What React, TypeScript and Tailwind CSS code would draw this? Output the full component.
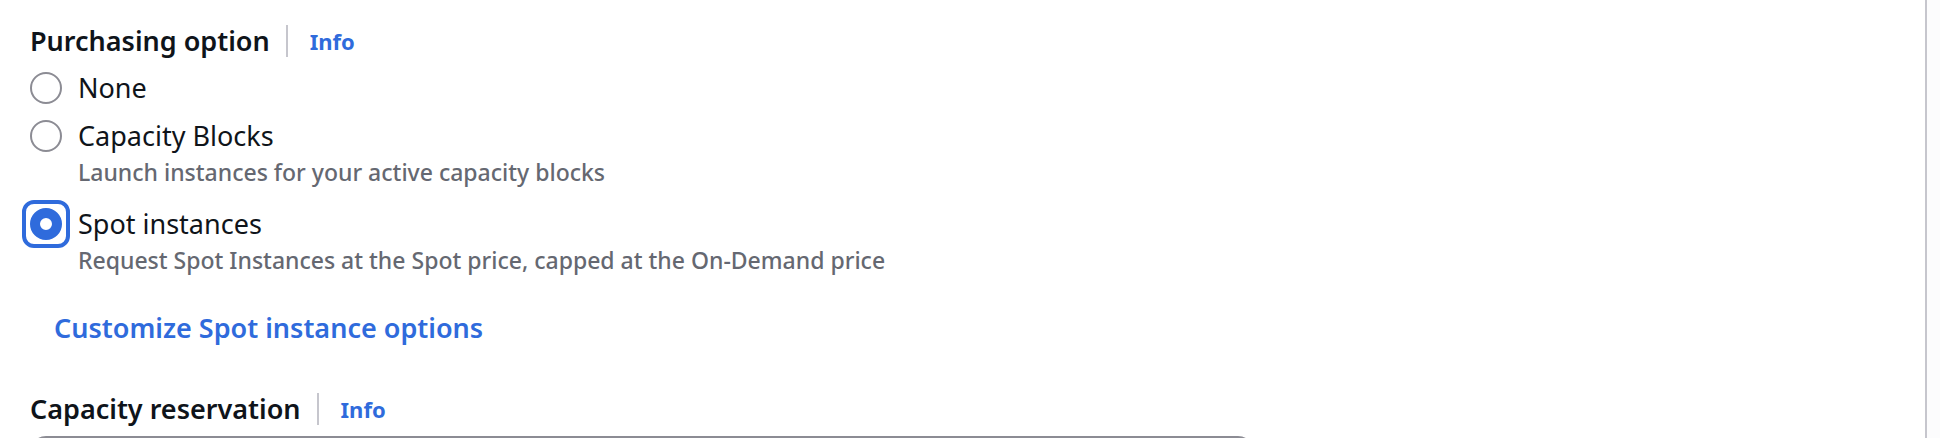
import { useState } from "react";

type Option = { value: string; label: string; description?: string };

const options: Option[] = [
  { value: "none", label: "None" },
  {
    value: "capacity-blocks",
    label: "Capacity Blocks",
    description: "Launch instances for your active capacity blocks",
  },
  {
    value: "spot",
    label: "Spot instances",
    description: "Request Spot Instances at the Spot price, capped at the On-Demand price",
  },
];

function InfoLink({ topic }: { topic: string }) {
  return (
    <a
      href="#info"
      aria-label={`Info about ${topic}`}
      className="ml-4 flex h-8 items-center border-l-2 border-[#c6c6cd] pl-[22px] text-[22px] leading-8 font-bold text-[#2f6bdc]"
    >
      Info
    </a>
  );
}

function RadioOption({
  option,
  checked,
  onSelect,
}: {
  option: Option;
  checked: boolean;
  onSelect: (value: string) => void;
}) {
  const id = `purchasing-${option.value}`;
  const ring = checked ? "rounded-[4px] outline-4 outline-offset-4 outline-[#2f6bdc]" : "";
  const circle = checked ? "border-[10px] border-[#2f6bdc]" : "border-2 border-[#8c8c94]";
  return (
    <div className="flex items-start gap-4">
      <span className={`flex size-8 shrink-0 ${ring}`}>
        <input
          type="radio"
          id={id}
          name="purchasing-option"
          value={option.value}
          checked={checked}
          onChange={() => onSelect(option.value)}
          aria-describedby={option.description ? `${id}-description` : undefined}
          className={`size-8 appearance-none rounded-full bg-white outline-none ${circle}`}
        />
      </span>
      <div>
        <label htmlFor={id} className="block text-[27px] leading-8 text-[#0f141a]">
          {option.label}
        </label>
        {option.description && (
          <p
            id={`${id}-description`}
            className="text-[23px] leading-10 font-medium text-[#656871]"
          >
            {option.description}
          </p>
        )}
      </div>
    </div>
  );
}

export default function App() {
  const [selected, setSelected] = useState("spot");

  return (
    <div className="flex h-screen overflow-hidden bg-[#fcfcfd] font-['Noto_Sans',sans-serif]">
      <main className="mr-[13px] flex-1 border-r-2 border-[#c6c6cd] bg-white px-[30px] pt-[25px]">
        <div className="flex items-center">
          <h3 id="purchasing-option" className="text-[27px] leading-[30px] font-semibold text-[#0f141a]">
            Purchasing option
          </h3>
          <InfoLink topic="purchasing option" />
        </div>
        <div
          role="radiogroup"
          aria-labelledby="purchasing-option"
          className="mt-[15px] flex flex-col gap-4"
        >
          {options.map((option) => (
            <RadioOption
              key={option.value}
              option={option}
              checked={selected === option.value}
              onSelect={setSelected}
            />
          ))}
        </div>
        <button
          type="button"
          className="mt-8 ml-6 block text-[27px] leading-8 font-semibold text-[#2f6bdc]"
        >
          Customize Spot instance options
        </button>
        <div className="mt-[49px] flex items-center">
          <label
            htmlFor="capacity-reservation"
            className="text-[27px] leading-[30px] font-semibold text-[#0f141a]"
          >
            Capacity reservation
          </label>
          <InfoLink topic="capacity reservation" />
        </div>
        <select
          id="capacity-reservation"
          className="mt-[11px] block h-16 w-full max-w-[1224px] appearance-none rounded-2xl border-2 border-[#8c8c94] bg-white px-6 text-[27px] text-[#0f141a]"
        >
          <option value="" />
        </select>
      </main>
    </div>
  );
}
